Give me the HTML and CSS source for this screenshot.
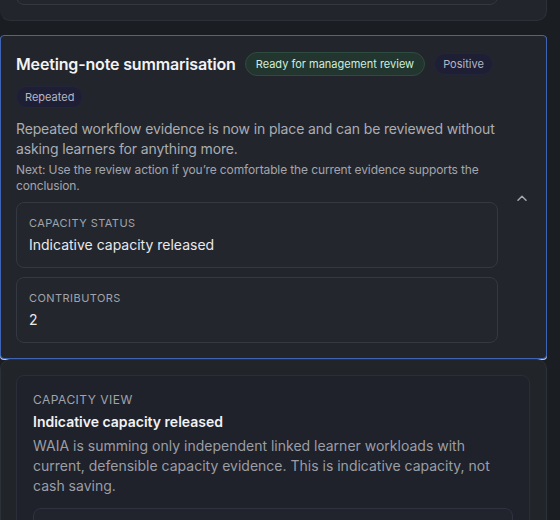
FILE: index.html
```html
<!DOCTYPE html>
<html lang="en">
<head>
<meta charset="utf-8">
<link rel="stylesheet" href="styles.css">
</head>
<body>
<div class="list">
  <section class="card prev">
    <div class="prev-main">
      <div class="box prev-box"></div>
    </div>
  </section>

  <section class="card active">
    <div class="main">
      <div class="head">
        <h2 class="title">Meeting-note summarisation</h2>
        <span class="badge ready">Ready for management review</span>
        <span class="badge tag">Positive</span>
        <span class="badge tag">Repeated</span>
      </div>
      <p class="summary">Repeated workflow evidence is now in place and can be reviewed without asking learners for anything more.</p>
      <p class="next">Next: Use the review action if you’re comfortable the current evidence supports the conclusion.</p>
      <div class="box stat first">
        <div class="label">Capacity status</div>
        <div class="value">Indicative capacity released</div>
      </div>
      <div class="box stat">
        <div class="label">Contributors</div>
        <div class="value">2</div>
      </div>
    </div>
    <div class="toggle">
      <svg width="10" height="6" viewBox="0 0 10 6" aria-hidden="true"><polyline points="1,5.2 5,1.2 9,5.2" fill="none" stroke="#a4a8ae" stroke-width="1.5" stroke-linecap="round" stroke-linejoin="round"/></svg>
    </div>
  </section>

  <section class="card detail">
    <div class="view">
      <div class="label view-label">Capacity view</div>
      <div class="view-title">Indicative capacity released</div>
      <p class="view-text">WAIA is summing only independent linked learner workloads with current, defensible capacity evidence. This is indicative capacity, not cash saving.</p>
      <div class="subbox"></div>
    </div>
  </section>
</div>
</body>
</html>
```

FILE: styles.css
```css
* { box-sizing: border-box; }
html, body {
  margin: 0;
  padding: 0;
  background: #1a1d22;
  height: 100%;
  overflow: hidden;
}
body {
  font-family: Inter, "Noto Sans", "Liberation Sans", sans-serif;
  color: #e6e7ea;
}
.list {
  width: 547px;
  display: flex;
  flex-direction: column;
}
.card {
  background: #22252c;
  border: 1px solid #2c3037;
  border-radius: 10px;
}
.prev {
  margin-top: -71px;
  padding: 15px 48px 15px 15px;
  border-left-color: transparent;
}
.prev-box {
  height: 60px;
}
.box {
  border: 1px solid #343840;
  border-radius: 8px;
  background: #23262d;
}
.active {
  margin-top: 14px;
  border: 1px solid #3e64b3;
  border-radius: 4px;
  box-shadow: 0 1px 0 0 #b7c6ea;
  padding: 16px 15px 15px;
  display: flex;
  align-items: center;
}
.main {
  width: 482px;
  flex: none;
}
.toggle {
  margin-left: 19px;
  display: flex;
  align-items: center;
}
.toggle svg { display: block; }
.head {
  display: flex;
  flex-wrap: wrap;
  align-items: center;
  gap: 10px 9px;
}
.title {
  margin: 0;
  font-size: 16px;
  line-height: 24px;
  font-weight: 600;
  letter-spacing: -0.01em;
  color: #f2f3f5;
}
.badge {
  display: inline-block;
  font-size: 11px;
  line-height: 14px;
  padding: 3px 8px;
  border-radius: 999px;
  border: 1px solid transparent;
  font-weight: 400;
}
.ready {
  background: #23352f;
  border-color: #2f4c40;
  color: #cdeedd;
  padding: 4px 10px;
}
.tag {
  background: #1e1f34;
  border-color: #23253a;
  color: #b4b7c4;
}
.summary {
  margin: 11px 0 0;
  font-size: 14px;
  line-height: 20px;
  letter-spacing: -0.01em;
  color: #aaadb3;
}
.next {
  margin: 3px 0 0;
  font-size: 12px;
  line-height: 16px;
  letter-spacing: -0.01em;
  color: #a3a6ac;
}
.stat {
  margin-top: 9px;
  padding: 12px;
}
.stat.first {
  margin-top: 8px;
}
.label {
  font-size: 11px;
  line-height: 16px;
  text-transform: uppercase;
  letter-spacing: 0.04em;
  color: #a0a4aa;
}
.value {
  margin-top: 4px;
  font-size: 14px;
  line-height: 20px;
  color: #e8e9ec;
}
.detail {
  margin-top: 0;
  padding: 15px 16px 15px 15px;
  height: 200px;
  background: #212429;
}
.view {
  background: #1f212b;
  border: 1px solid #2b2e39;
  border-radius: 8px;
  padding: 16px;
  height: 200px;
}
.view-label {
  font-size: 12px;
}
.view-title {
  margin-top: 4px;
  font-size: 14px;
  line-height: 20px;
  font-weight: 600;
  color: #f1f2f4;
}
.view-text {
  margin: 4px 0 0;
  font-size: 14px;
  line-height: 20px;
  color: #9b9ea5;
}
.subbox {
  margin-top: 12px;
  height: 60px;
  border: 1px solid #30333f;
  border-radius: 8px;
  background: #21232d;
}
```
